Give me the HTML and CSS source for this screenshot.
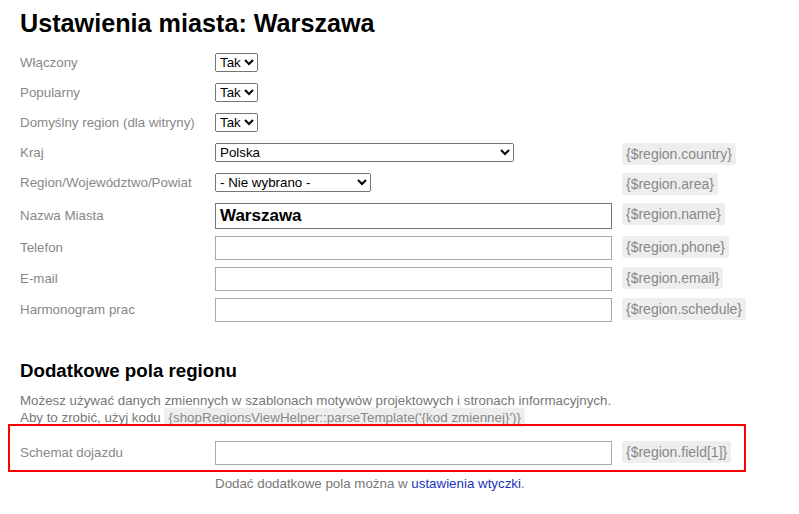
FILE: index.html
```html
<!DOCTYPE html>
<html lang="pl">
<head>
<meta charset="utf-8">
<title>Ustawienia miasta: Warszawa</title>
<link rel="stylesheet" href="styles.css">
</head>
<body>
<div class="page">
  <h1 class="title">Ustawienia miasta: Warszawa</h1>

  <div class="form">
    <div class="row row-sel">
      <div class="label lh-sel">Włączony</div>
      <div class="field"><select class="sel"><option>Tak</option><option>Nie</option></select></div>
    </div>
    <div class="row row-sel">
      <div class="label lh-sel">Popularny</div>
      <div class="field"><select class="sel"><option>Tak</option><option>Nie</option></select></div>
    </div>
    <div class="row row-sel">
      <div class="label lh-sel">Domyślny region (dla witryny)</div>
      <div class="field"><select class="sel"><option>Tak</option><option>Nie</option></select></div>
    </div>
    <div class="row row-sel">
      <div class="label lh-sel">Kraj</div>
      <div class="field"><select class="sel sel-country"><option>Polska</option></select></div>
      <span class="tag">{$region.country}</span>
    </div>
    <div class="row row-sel">
      <div class="label lh-sel">Region/Województwo/Powiat</div>
      <div class="field"><select class="sel sel-region"><option>- Nie wybrano -</option></select></div>
      <span class="tag">{$region.area}</span>
    </div>
    <div class="row row-name">
      <div class="label lh-name">Nazwa Miasta</div>
      <div class="field"><input class="inp inp-name" type="text" value="Warszawa"></div>
      <span class="tag">{$region.name}</span>
    </div>
    <div class="row row-text">
      <div class="label lh-text">Telefon</div>
      <div class="field"><input class="inp" type="text"></div>
      <span class="tag">{$region.phone}</span>
    </div>
    <div class="row row-text">
      <div class="label lh-text">E-mail</div>
      <div class="field"><input class="inp" type="text"></div>
      <span class="tag">{$region.email}</span>
    </div>
    <div class="row row-text">
      <div class="label lh-text">Harmonogram prac</div>
      <div class="field"><input class="inp" type="text"></div>
      <span class="tag">{$region.schedule}</span>
    </div>
  </div>

  <h2 class="subtitle">Dodatkowe pola regionu</h2>
  <p class="desc">Możesz używać danych zmiennych w szablonach motywów projektowych i stronach informacyjnych.<br>Aby to zrobić, użyj kodu <span class="code">{shopRegionsViewHelper::parseTemplate('{kod zmiennej}')}</span></p>

  <div class="highlight">
    <div class="row row-text row-last">
      <div class="label lh-text">Schemat dojazdu</div>
      <div class="field"><input class="inp" type="text"></div>
      <span class="tag">{$region.field[1]}</span>
    </div>
  </div>

  <p class="note">Dodać dodatkowe pola można w <a class="link" href="#">ustawienia wtyczki</a>.</p>
</div>
</body>
</html>
```

FILE: styles.css
```css
html, body {
  margin: 0;
  padding: 0;
  background: #ffffff;
}

body {
  font-family: "Liberation Sans", Arial, sans-serif;
  font-size: 13.33px;
  color: #000;
}

.page {
  padding: 0 20px;
}

.title {
  margin: 9px 0 0;
  font-size: 25.2px;
  line-height: 29px;
  font-weight: bold;
  color: #000;
}

.form {
  margin-top: 15px;
}

.row {
  display: flex;
  align-items: flex-start;
}

.row-sel { min-height: 30px; }
.row-name { min-height: 33px; }
.row-text { min-height: 31px; }

.label {
  width: 195px;
  flex: none;
  color: #888;
  font-size: 13.33px;
  white-space: nowrap;
}

.lh-sel { line-height: 20px; }
.lh-name { line-height: 26px; }
.lh-text { line-height: 24px; }

.field {
  width: 407px;
  flex: none;
}

.sel {
  font-family: "Liberation Sans", Arial, sans-serif;
  font-size: 13.33px;
  height: 19px;
  color: #000;
  margin: 0;
}

.sel-country { width: 299px; }
.sel-region { width: 156px; }

.inp {
  box-sizing: border-box;
  width: 397px;
  height: 24px;
  margin: 0;
  border: 1px solid #a9a9a9;
  padding: 1px 4px;
  font-family: "Liberation Sans", Arial, sans-serif;
  font-size: 13.33px;
  background: #fff;
}

.inp-name {
  height: 26px;
  border-color: #767676;
  font-weight: bold;
  font-size: 17px;
  color: #000;
}

.tag {
  display: inline-block;
  background: #eeeeee;
  color: #888;
  font-size: 14px;
  line-height: 22px;
  padding: 0 4px;
  border-radius: 3px;
  white-space: nowrap;
}

.subtitle {
  margin: 31px 0 0;
  font-size: 18.7px;
  line-height: 22px;
  font-weight: bold;
  color: #000;
}

.desc {
  margin: 10px 0 0;
  color: #777;
  font-size: 13.33px;
  line-height: 17px;
}

.code {
  background: #eeeeee;
  color: #888;
  font-size: 13.4px;
  padding: 2px 4px;
  border-radius: 3px;
}

.highlight {
  position: relative;
  box-sizing: border-box;
  width: 738px;
  margin: -2px 0 0 -12px;
  border: 2px solid #ff0000;
  padding: 15px 0 0 10px;
}

.row-last {
  min-height: 29px;
}

.note {
  margin: 3px 0 0 195px;
  color: #777;
  font-size: 13.33px;
  line-height: 17px;
}

.link {
  color: #2233bb;
  text-decoration: none;
}
```
